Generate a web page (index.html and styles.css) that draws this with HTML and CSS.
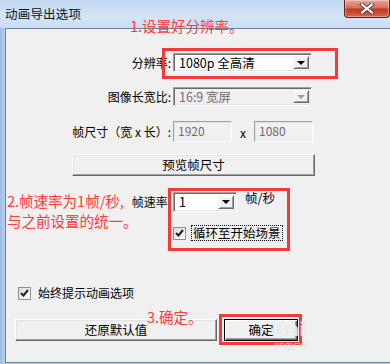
FILE: index.html
```html
<!DOCTYPE html>
<html lang="zh">
<head>
    <meta charset="UTF-8">
    <meta name="viewport" content="width=device-width, initial-scale=1.0">
    <title>动画导出选项</title>
    <link rel="stylesheet" href="styles.css">
</head>
<body>
    <div class="window">
        <div class="titlebar">
            <span class="title">动画导出选项</span>
            <button class="close-btn" aria-label="关闭">
                <svg width="16" height="11" viewBox="0 0 16 11">
                    <path d="M3 1.5 L13 9.5 M13 1.5 L3 9.5" stroke="#4a4a4a" stroke-width="4" stroke-linecap="square"/>
                    <path d="M3 1.5 L13 9.5 M13 1.5 L3 9.5" stroke="#fff" stroke-width="2" stroke-linecap="square"/>
                </svg>
            </button>
        </div>

        <div class="panel">
            <div class="row row-res">
                <label class="lbl">分辨率:</label>
                <div class="combo combo-wide">
                    <span class="combo-text">1080p 全高清</span>
                    <span class="combo-arrow"><i class="tri"></i></span>
                </div>
            </div>

            <div class="row row-ratio">
                <label class="lbl">图像长宽比:</label>
                <div class="combo combo-wide disabled">
                    <span class="combo-text">16:9 宽屏</span>
                    <span class="combo-arrow"><i class="tri"></i></span>
                </div>
            </div>

            <div class="row row-size">
                <label class="lbl">帧尺寸（宽 x 长）:</label>
                <div class="field">1920</div>
                <span class="times">x</span>
                <div class="field">1080</div>
            </div>

            <button class="btn btn-preview">预览帧尺寸</button>

            <div class="row row-fps">
                <label class="lbl">帧速率:</label>
                <div class="combo combo-small">
                    <span class="combo-text">1</span>
                    <span class="combo-arrow"><i class="tri"></i></span>
                </div>
                <span class="unit">帧/秒</span>
            </div>

            <div class="check-row check-loop">
                <span class="checkbox"><svg width="9" height="9" viewBox="0 0 9 9"><path d="M1 4 L3.5 6.5 L8 1" fill="none" stroke="#222" stroke-width="2"/></svg></span>
                <span class="check-text focused">循环至开始场景</span>
            </div>

            <div class="check-row check-always">
                <span class="checkbox"><svg width="9" height="9" viewBox="0 0 9 9"><path d="M1 4 L3.5 6.5 L8 1" fill="none" stroke="#222" stroke-width="2"/></svg></span>
                <span class="check-text">始终提示动画选项</span>
            </div>

            <div class="button-row">
                <button class="btn btn-reset">还原默认值</button>
                <button class="btn btn-ok">确定</button>
            </div>
        </div>

        <!-- annotations drawn over the dialog -->
        <div class="note note-1">1.设置好分辨率。</div>
        <div class="mark mark-1"></div>
        <div class="note note-2">2.帧速率为1帧/秒,<br>与之前设置的统一。</div>
        <div class="mark mark-2"></div>
        <div class="note note-3">3.确定。</div>
        <div class="mark mark-3"></div>
        <div class="watermark">Bai<span>jingyan</span></div>
    </div>
</body>
</html>
```

FILE: styles.css
```css
* {
  box-sizing: border-box;
}

body {
  margin: 0;
  width: 390px;
  height: 364px;
  overflow: hidden;
  font-family: "Noto Sans CJK SC", "DejaVu Sans", sans-serif;
  font-size: 12px;
  color: #000;
  background: #a9c4e4;
}

.window {
  position: relative; /* anchor for the red annotations */
  width: 390px;
  height: 364px;
  background: linear-gradient(to right, #9dbce2 0, #b8d1ee 5px, #b8d1ee 100%);
}

.titlebar {
  height: 28px;
  display: flex;
  justify-content: space-between;
  align-items: flex-start;
  background: linear-gradient(to bottom, #c3d9f1, #d3e4f6 60%, #cadef3);
}

.title {
  padding: 7px 0 0 5px;
  line-height: 14px;
  font-size: 12.5px;
  letter-spacing: 0.2px;
  color: #111;
}

.close-btn {
  width: 46px;
  height: 18px;
  padding: 0;
  display: flex;
  align-items: center;
  justify-content: center;
  border: 1px solid #5b2118;
  border-top: none;
  border-radius: 0 0 4px 4px;
  background: linear-gradient(to bottom, #e8a698 0, #d9705d 45%, #c3371f 55%, #d4684f 100%);
  box-shadow: inset 0 0 0 1px rgba(255, 255, 255, 0.35);
}

.panel {
  margin-left: 5px;
  height: 335px;
  padding-top: 24px;
  background: #f0f0f0;
  border: 1px solid #6f7f93;
  border-right: none;
}

.row {
  display: flex;
  align-items: center;
}

.lbl {
  width: 165px;
  margin-right: 2px;
  text-align: right;
  line-height: 16px;
  white-space: nowrap;
}

.row-ratio {
  margin-top: 15px;
}

.row-size {
  margin-top: 15px;
}

.row-fps {
  margin-top: 16px;
}

/* combo boxes */
.combo {
  height: 19px;
  display: flex;
  align-items: stretch;
  background: #fff;
  border: 1px solid;
  border-color: #a0a0a0 #fff #fff #a0a0a0;
  box-shadow: inset 1px 1px 0 #696969, inset -1px -1px 0 #e3e3e3;
  padding: 2px 2px 2px 2px;
}

.combo-wide {
  width: 139px;
}

.combo-small {
  width: 64px;
  height: 20px;
}

.combo-text {
  flex: 1;
  padding-left: 3px;
  line-height: 14px;
  font-size: 12.5px;
}

.combo-arrow {
  width: 16px;
  display: flex;
  align-items: center;
  justify-content: center;
  background: #f0f0f0;
  border: 1px solid;
  border-color: #f0f0f0 #696969 #696969 #f0f0f0;
  box-shadow: inset 1px 1px 0 #fff, inset -1px -1px 0 #a0a0a0;
}

.tri {
  width: 0;
  height: 0;
  border-left: 4px solid transparent;
  border-right: 4px solid transparent;
  border-top: 4px solid #000;
}

.combo.disabled {
  background: #f0f0f0;
}

.combo.disabled .combo-text {
  color: #6d6d6d;
}

.combo.disabled .tri {
  border-top-color: #a0a0a0;
}

/* text fields */
.field {
  width: 59px;
  height: 21px;
  padding: 2px 0 0 4px;
  line-height: 14px;
  color: #6d6d6d;
  background: #f0f0f0;
  border: 1px solid;
  border-color: #a0a0a0 #fff #fff #a0a0a0;
  box-shadow: inset 1px 1px 0 #e3e3e3;
}

.times {
  width: 22px;
  text-align: center;
  line-height: 14px;
  padding-top: 3px;
}

.unit {
  margin-left: 8px;
  align-self: flex-start;
  margin-top: -2px;
  line-height: 16px;
  font-size: 12.5px;
}

/* push buttons */
.btn {
  height: 22px;
  padding: 0;
  font-family: inherit;
  font-size: 12.5px;
  line-height: 14px;
  color: #000;
  background: #f0f0f0;
  border: 1px solid;
  border-color: #fff #696969 #696969 #fff;
  box-shadow: inset -1px -1px 0 #a0a0a0, inset 1px 1px 0 #e3e3e3;
}

.btn-preview {
  display: block;
  width: 243px;
  margin: 12px 0 0 66px;
}

/* check boxes */
.check-row {
  display: flex;
  align-items: center;
}

.check-loop {
  margin: 13px 0 0 167px;
}

.check-loop .check-text {
  font-size: 12.5px;
}

.check-always {
  margin: 44px 0 0 12px;
}

.checkbox {
  width: 13px;
  height: 13px;
  display: flex;
  align-items: center;
  justify-content: center;
  background: linear-gradient(to bottom right, #dcdcdc, #fff);
  border: 1px solid #8f8f8f;
}

.check-text {
  margin-left: 5px;
  padding: 0 1px;
  line-height: 14px;
  border: 1px solid transparent;
}

.check-text.focused {
  border: 1px dotted #000;
}

.button-row {
  display: flex;
  gap: 7px;
  margin: 18px 0 0 9px;
}

.btn-reset {
  width: 202px;
}

.btn-ok {
  width: 74px;
  border-color: #000;
  box-shadow: inset 1px 1px 0 #fff, inset -1px -1px 0 #696969, inset -2px -2px 0 #a0a0a0;
}

/* red annotations on top of the screenshot */
.note {
  position: absolute;
  font-size: 14.5px;
  line-height: 20px;
  color: #ff3b3b;
  white-space: nowrap;
}

.note-1 {
  left: 130px;
  top: 16px;
}

.note-2 {
  left: 7px;
  top: 191px;
}

.note-3 {
  left: 147px;
  top: 307px;
}

.mark {
  position: absolute;
  border: 3px solid #f23a3a;
}

.mark-1 {
  left: 162px;
  top: 48px;
  width: 176px;
  height: 31px;
}

.mark-2 {
  left: 168px;
  top: 188px;
  width: 122px;
  height: 63px;
}

.mark-3 {
  left: 219px;
  top: 314px;
  width: 83px;
  height: 31px;
}

.watermark {
  position: absolute;
  left: 272px;
  top: 318px;
  font-family: "DejaVu Sans", sans-serif;
  font-size: 19px;
  font-weight: bold;
  line-height: 22px;
  color: rgba(255, 255, 255, 0.75);
  text-shadow: 0 0 1px rgba(150, 150, 150, 0.5);
}

.watermark span {
  display: block;
  font-size: 9px;
  line-height: 10px;
  font-weight: normal;
  margin-left: 2px;
}
```
